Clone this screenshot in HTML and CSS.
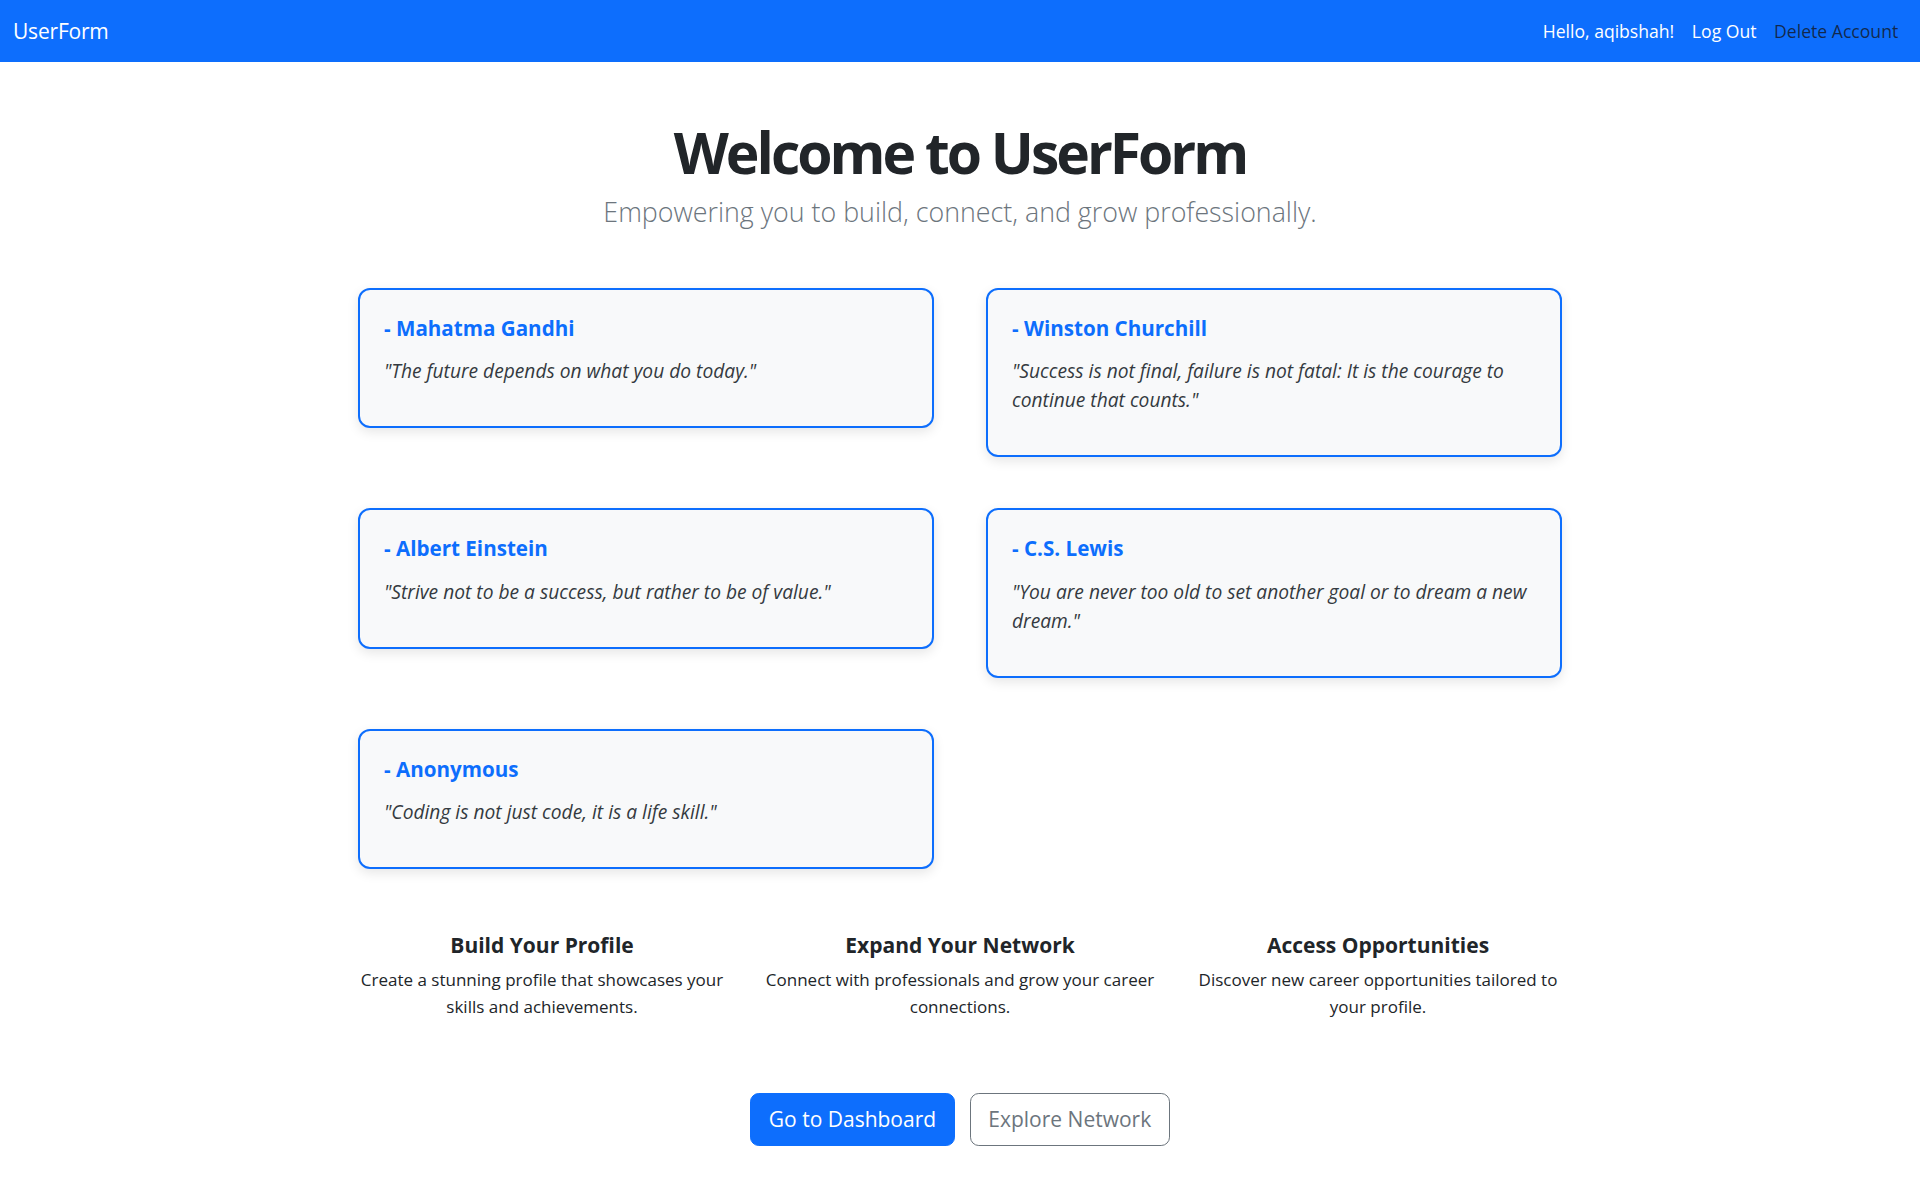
FILE: index.html
```html
<!DOCTYPE html>
<html lang="en">
<head>
<meta charset="utf-8">
<title>UserForm</title>
<link rel="stylesheet" href="styles.css">
</head>
<body>
<nav class="navbar">
  <a class="brand" href="#">UserForm</a>
  <div class="nav-links">
    <span class="nav-item nav-text">Hello, aqibshah!</span>
    <a class="nav-item nav-light" href="#">Log Out</a>
    <a class="nav-item nav-dark" href="#">Delete Account</a>
  </div>
</nav>

<main class="container">
  <header class="hero">
    <h1 class="hero-title">Welcome to UserForm</h1>
    <p class="hero-lead">Empowering you to build, connect, and grow professionally.</p>
  </header>

  <section class="quotes">
    <div class="quote-card">
      <h5 class="quote-author">- Mahatma Gandhi</h5>
      <p class="quote-text">"The future depends on what you do today."</p>
    </div>
    <div class="quote-card">
      <h5 class="quote-author">- Winston Churchill</h5>
      <p class="quote-text">"Success is not final, failure is not fatal: It is the courage to continue that counts."</p>
    </div>
    <div class="quote-card">
      <h5 class="quote-author">- Albert Einstein</h5>
      <p class="quote-text">"Strive not to be a success, but rather to be of value."</p>
    </div>
    <div class="quote-card">
      <h5 class="quote-author">- C.S. Lewis</h5>
      <p class="quote-text">"You are never too old to set another goal or to dream a new dream."</p>
    </div>
    <div class="quote-card">
      <h5 class="quote-author">- Anonymous</h5>
      <p class="quote-text">"Coding is not just code, it is a life skill."</p>
    </div>
  </section>

  <section class="features">
    <div class="feature">
      <h5 class="feature-title">Build Your Profile</h5>
      <p class="feature-text">Create a stunning profile that showcases your skills and achievements.</p>
    </div>
    <div class="feature">
      <h5 class="feature-title">Expand Your Network</h5>
      <p class="feature-text">Connect with professionals and grow your career connections.</p>
    </div>
    <div class="feature">
      <h5 class="feature-title">Access Opportunities</h5>
      <p class="feature-text">Discover new career opportunities tailored to your profile.</p>
    </div>
  </section>

  <div class="actions">
    <a class="btn btn-primary" href="#">Go to Dashboard</a>
    <a class="btn btn-outline" href="#">Explore Network</a>
  </div>
</main>
</body>
</html>
```

FILE: styles.css
```css
* { box-sizing: border-box; }

body {
  margin: 0;
  font-family: "Open Sans", "Noto Sans", sans-serif;
  font-size: 17.6px;
  line-height: 1.5;
  color: #212529;
  background: #ffffff;
}

a { text-decoration: none; }

.navbar {
  height: 62px;
  background: #0d6efd;
  display: flex;
  align-items: center;
  justify-content: space-between;
  padding: 0 13px;
}

.brand {
  color: #ffffff;
  font-size: 21px;
  line-height: 33px;
  letter-spacing: -0.2px;
}

.nav-links {
  display: flex;
  align-items: center;
}

.nav-item {
  padding: 0 8.8px;
  font-size: 17.6px;
  line-height: 26.4px;
}

.nav-text, .nav-light { color: #ffffff; }
.nav-dark { color: rgba(20, 28, 45, 0.85); }

.container {
  width: 1254px;
  margin: 0 auto;
}

.hero {
  text-align: center;
  padding-top: 53px;
}

.hero-title {
  margin: 0 0 3px;
  font-size: 57px;
  line-height: 74px;
  font-weight: 700;
  letter-spacing: -3px;
  color: #212529;
}

.hero-lead {
  margin: 0;
  font-size: 26.8px;
  line-height: 39.6px;
  font-weight: 300;
  color: #6c757d;
}

.quotes {
  margin-top: 56px;
  display: grid;
  grid-template-columns: repeat(2, 576px);
  column-gap: 52px;
  row-gap: 51px;
  justify-content: center;
  align-items: start;
}

.quote-card {
  background: #f8f9fa;
  border: 2px solid #0d6efd;
  border-radius: 12px;
  padding: 25px 24px 24px;
  box-shadow: 0 4px 12px rgba(0, 0, 0, 0.1);
}

.quote-author {
  margin: 0 0 15px;
  font-size: 20.6px;
  line-height: 26.4px;
  font-weight: 700;
  color: #0d6efd;
}

.quote-text {
  margin: 0 0 16.5px;
  font-style: italic;
  font-size: 19.2px;
  line-height: 29.4px;
  color: #343a40;
}

.features {
  margin-top: 63px;
  display: grid;
  grid-template-columns: repeat(3, 1fr);
}

.feature {
  padding: 0 12px;
  text-align: center;
}

.feature-title {
  margin: 0 0 7px;
  font-size: 21px;
  line-height: 26.4px;
  font-weight: 700;
  color: #212529;
}

.feature-text {
  margin: 0;
  font-size: 17px;
  line-height: 27px;
}

.actions {
  margin-top: 73px;
  display: flex;
  justify-content: center;
  gap: 15px;
  padding-bottom: 40px;
}

.btn {
  display: inline-block;
  font-size: 21px;
  line-height: 33px;
  padding: 9px 17.6px;
  border: 1px solid transparent;
  border-radius: 8.8px;
}

.btn-primary {
  background: #0d6efd;
  border-color: #0d6efd;
  color: #ffffff;
}

.btn-outline {
  background: #ffffff;
  border-color: #6c757d;
  color: #6c757d;
}
```
